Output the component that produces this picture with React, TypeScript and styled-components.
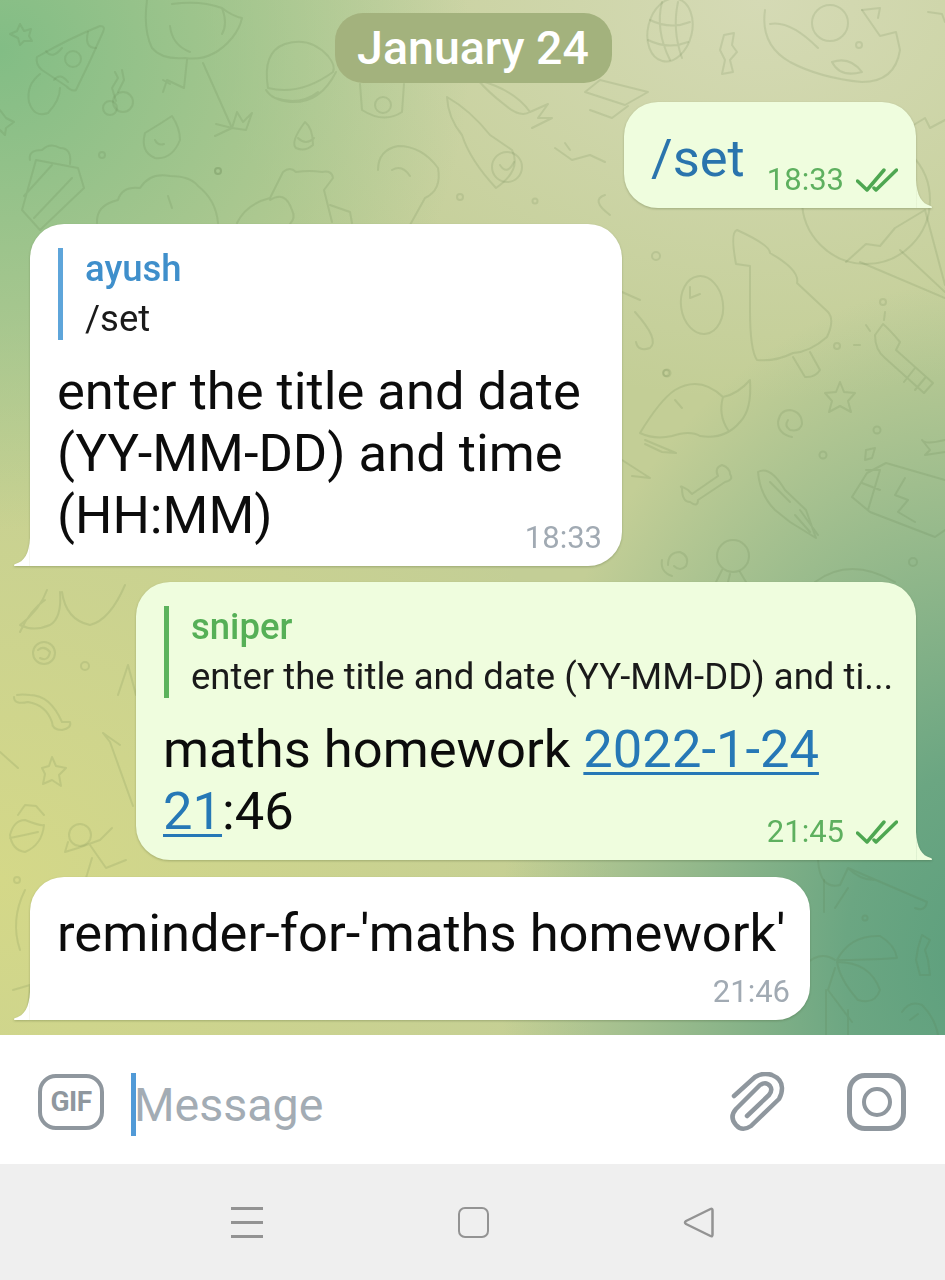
import React from 'react';
import styled, {createGlobalStyle} from "styled-components";

const GlobalStyle = createGlobalStyle`
  html, body {
    margin: 0;
    padding: 0;
    background: #fff;
  }
  * {
    box-sizing: border-box;
  }
`;

function Doodles() {
    return (
        <DoodleSvg viewBox="0 0 945 1035" fill="none">
            {/* top left: star, pizza, cherries */}
            <path d="M20 24 L24 31 L31 29 L29 36 L32 41 L24 41 L20 45 L18 38 L10 34 L17 31 Z" />
            <path d="M37 57 Q70 38 100 26 Q106 26 103 32 Q90 62 76 90 Q72 92 66 86 L42 70 Q35 64 37 57 Z" />
            <path d="M46 51 Q52 60 62 48 M88 32 Q84 48 96 48" />
            <circle cx="73" cy="59" r="8" />
            <path d="M40 74 Q26 85 29 102 Q34 118 48 113 Q60 100 60 88 M54 80 Q60 72 68 82" />
            <circle cx="110" cy="108" r="7" />
            <circle cx="123" cy="102" r="10" />
            <path d="M116 101 L112 88 L118 78 L115 72 M118 92 L124 80 L122 70" />
            <path d="M0 110 L6 118 L14 122 L6 128 L5 135 L0 130" />

            {/* flamingo */}
            <path d="M147 0 Q143 30 152 48 Q162 60 185 58 Q212 62 232 38 Q240 28 242 18 Q232 16 222 8 Q200 0 172 4 M170 26 Q172 45 190 52 M222 8 Q228 24 222 34" />
            <path d="M187 60 L184 88 L167 80 M163 80 L170 84 M163 92 L167 80 M203 63 L232 128 M216 124 L232 128 L215 136 M232 128 L237 112 L243 122 L252 113 L246 130 L232 128" />
            <path d="M145 133 Q160 124 172 116 Q180 128 180 140 Q172 160 155 158 Q140 152 145 133 Z M155 140 Q158 146 164 144" />
            <circle cx="102" cy="155" r="3" />
            <circle cx="218" cy="171" r="3" />

            {/* burger and candy corn */}
            <path d="M268 88 Q262 52 285 44 Q310 36 328 56 Q336 66 333 72 Q300 96 268 88 Z" />
            <path d="M266 90 Q272 100 290 102 Q320 104 336 72 M275 98 Q300 106 318 92" />
            <path d="M305 122 Q313 128 313 145 Q305 152 296 148 Q290 142 305 122 Z M298 138 Q306 146 314 138" />

            {/* popcorn, cloud, bear */}
            <path d="M22 210 L36 160 L78 168 L84 188 L40 230 Z M24 196 L52 165 M34 218 L72 178" />
            <path d="M30 160 Q28 150 42 150 Q50 142 60 148 Q72 148 70 164" />
            <path d="M97 223 Q96 205 118 200 Q122 186 140 188 Q150 172 170 176 Q190 176 198 186 Q216 200 218 223 M168 196 L172 208" />
            <path d="M237 223 Q246 204 270 198 L283 172 Q290 166 296 172 Q310 170 322 172 Q332 170 333 178 L324 190 L332 222" />
            <path d="M270 200 Q285 190 292 210 Q296 218 290 224 M330 205 L350 212 L352 223" />
            <circle cx="218" cy="171" r="3" />

            {/* ice cream, cup, drop */}
            <path d="M360 84 L362 110 Q384 124 402 112 L404 84" />
            <circle cx="383" cy="105" r="8" />
            <path d="M378 170 Q378 150 398 146 Q422 146 438 168 Q442 190 425 198 L410 225 M392 170 Q402 164 410 176" />

            {/* carrot, feather and swirl */}
            <path d="M478 80 Q515 90 530 112 Q520 118 505 105 Q488 92 478 80 Z M530 112 L548 104 L538 118 L552 118 L532 128" />
            <path d="M447 97 Q470 110 490 135 L512 150 Q522 170 496 188 Q470 160 462 135 Q448 118 447 97 Z" />
            <circle cx="507" cy="167" r="15" />
            <path d="M500 165 Q507 176 514 162" />
            <circle cx="460" cy="197" r="3" />
            <circle cx="535" cy="201" r="2.5" />
            <path d="M555 148 L572 160 L590 155 L605 162 M565 143 L570 150" />
            <path d="M610 215 Q590 200 605 195" />

            {/* top right: envelope, pineapple, candy, bird */}
            <path d="M600 80 L648 92 L625 105 L585 92 Z M590 110 L612 118 L628 106" />
            <ellipse cx="670" cy="30" rx="22" ry="32" transform="rotate(14 670 30)" />
            <path d="M650 20 Q670 30 690 22 M648 40 Q668 50 688 42 M662 2 Q655 30 670 60 M678 2 Q672 30 682 58" />
            <path d="M724 35 L734 33 L732 45 L737 52 L730 60 L733 72 L722 74 L725 60 L720 50 Z" />
            <circle cx="830" cy="23" r="18" />
            <path d="M765 10 Q760 45 790 62 Q820 78 862 82 Q895 82 900 50 L896 32 L880 36 L862 10 M770 24 Q790 20 818 48 M832 62 Q850 56 862 72 Q840 78 832 62 Z" />
            <path d="M862 10 L880 8 L878 18 M928 12 L942 14 L945 22 M912 126 L925 118 L930 128 L945 120" />
            <circle cx="859" cy="45" r="3" />

            {/* middle right: balloon, tree, egg, flashlight */}
            <circle cx="866" cy="200" r="64" />
            <path d="M846 262 L866 244 L880 246 L895 228 L925 210 M860 262 L945 298 M900 250 L945 292 M925 210 L945 285" />
            <path d="M737 230 Q730 232 736 264 L750 266 L750 310 Q750 350 757 360 Q775 362 793 353 Q810 352 827 337 Q835 320 828 312 L797 283 Q800 270 770 253 Q770 245 737 230 Z" />
            <path d="M793 357 L805 377 Q815 378 820 370 L810 352" />
            <circle cx="656" cy="256" r="4" />
            <ellipse cx="702" cy="305" rx="21" ry="29" transform="rotate(-8 702 305)" />
            <path d="M690 287 L690 298 L700 294" />
            <path d="M622 292 L640 300 M635 312 Q660 340 650 348 Q638 352 636 342" />
            <path d="M875 335 L883 324 Q890 330 900 342 L896 350 L933 383 L924 393 L885 358 Q875 350 875 335 Z M915 368 L904 382 M925 378 L915 390" />
            <circle cx="883" cy="302" r="3" />
            <path d="M885 312 L884 320 M866 325 L870 331 M854 345 L860 345" />
            <circle cx="837" cy="346" r="3" />
            <path d="M840 382 L844 392 L855 393 L848 401 L851 412 L840 406 L829 412 L832 401 L825 393 L836 392 Z" />
            <circle cx="666" cy="373" r="3" />

            {/* fox tail, swirl, bone */}
            <path d="M640 433 Q660 400 675 390 Q700 375 723 397 Q738 394 750 380 Q752 410 740 422 Q725 440 700 436 Q690 430 672 436 Q655 440 640 433 Z M723 397 Q718 415 728 430 M675 400 L682 408" />
            <path d="M645 440 L676 453 L662 452 L645 444 M622 460 L650 478 L632 476" />
            <path d="M792 437 Q778 434 778 422 Q780 410 790 410 Q802 412 802 424 Q800 432 790 430 Q784 426 788 420" />
            <path d="M682 488 Q678 484 688 490 L692 494 L718 476 Q714 468 722 465 Q730 468 730 474 Q734 480 725 482 L698 500 Q698 508 690 502 Q682 502 682 488 Z" />
            <circle cx="877" cy="430" r="3.5" />
            <circle cx="823" cy="455" r="3.5" />
            <circle cx="667" cy="373" r="3.5" />

            {/* squid and chocolate */}
            <path d="M758 472 Q770 465 785 490 L806 510 L816 538 L790 522 L775 510 Q760 495 758 472 Z M770 482 L790 502 M800 510 L818 535 M795 515 L810 532" />
            <path d="M852 497 L867 473 L886 463 L945 480 M852 497 L870 512 L935 537 L945 530 M866 470 L880 470 L868 510 M862 483 L880 490 M905 478 L895 495 L908 500 L898 512 L915 522" />
            <path d="M866 450 L875 448 L872 458 L865 460 Z" />
            <path d="M945 440 Q925 445 922 440 L930 450 L925 455 L945 452" />

            {/* bottom of the right column */}
            <path d="M668 565 Q668 552 680 552 Q690 556 686 566 Q680 572 674 566 M662 560 Q660 572 672 576" />
            <circle cx="733" cy="556" r="16" />
            <path d="M722 570 L716 582 M730 574 L728 582 M740 572 L746 582" />
            <path d="M815 582 Q850 556 895 582" />
            <circle cx="913" cy="562" r="4" />

            {/* left column below the first reply */}
            <path d="M20 632 Q30 610 45 600 M47 590 Q40 610 20 625 Q34 632 50 625 Q62 618 60 592 M62 592 Q66 620 90 625 Q110 620 125 585" />
            <circle cx="44" cy="653" r="11" />
            <path d="M38 650 Q44 645 50 652 Q48 662 40 658" />
            <circle cx="85" cy="666" r="4" />
            <path d="M17 695 Q22 694 30 695 Q50 695 62 722 L70 722 Q72 728 62 730 Q52 730 52 722 Q46 705 28 702 Q14 705 14 697" />
            <path d="M0 752 L18 768" />
            <path d="M52 757 L56 766 L66 768 L59 775 L61 786 L52 780 L43 784 L45 774 L42 768 L49 766 Z" />
            <path d="M18 815 L25 805 L36 806 L44 815 M10 835 Q14 820 25 820 Q40 826 44 825 Q42 845 25 852 Q12 850 10 835 Z M10 838 Q25 835 38 832" />
            <circle cx="80" cy="835" r="11" />
            <path d="M68 842 L65 852 L78 848 L100 840 L112 828 M90 845 L106 868 L126 860 M92 858 L86 878" />
            <path d="M118 695 L128 665 L136 695 M103 733 L110 742 L133 806 M103 733 L120 745" />
            <circle cx="17" cy="880" r="3" />
            <path d="M25 890 Q10 920 20 950 M13 990 L30 985 L28 1010" />

            {/* palm, umbrella and candy */}
            <path d="M818 860 Q820 890 840 885 L848 868 Q860 880 874 880 M848 868 L927 902 Q925 912 915 908" />
            <path d="M824 880 L824 912 M835 908 L848 888" />
            <path d="M837 960 Q850 935 880 936 Q895 945 897 958 Q865 960 837 960 Z" />
            <path d="M837 962 Q870 962 880 990 Q875 1005 858 1000 Q840 980 837 962 Z M805 965 Q820 950 835 960 M835 968 L828 990 L852 1022 M826 990 L826 1035 M848 1010 L848 1035" />
            <path d="M922 935 L930 940 L925 950 L928 960 L930 975 L920 975 L916 960 L918 948 Z" />
            <path d="M902 1012 Q910 1000 922 1005 Q935 1018 938 1035 M910 1020 L918 1014" />
            <circle cx="865" cy="918" r="2.5" />
        </DoodleSvg>
    );
}

function DoubleCheck() {
    return (
        <CheckSvg viewBox="0 0 42 24" fill="none">
            <path d="M1.5 13 L11 22 L28 2" />
            <path d="M18 20 L20 22 L40.5 2" />
        </CheckSvg>
    );
}

type TailProps = {
    $side: "left" | "right",
    color: string
}

function Tail({$side, color}: TailProps) {
    return (
        <TailSvg $side={$side} viewBox="0 0 24 40">
            {$side === "right"
                ? <path d="M0 0 C1 22 8 34 21 37 Q24 38 22 40 L0 40 Z" fill={color} />
                : <path d="M24 0 C23 22 16 34 3 37 Q0 38 2 40 L24 40 Z" fill={color} />}
        </TailSvg>
    );
}

function App() {
    return (
        <Page>
            <GlobalStyle />
            <Chat>
                <Wallpaper>
                    <Doodles />
                </Wallpaper>

                <DatePill>January 24</DatePill>

                <Outgoing $width={292} $height={106} $top={19}>
                    <Command>/set</Command>
                    <Meta $out>18:33 <DoubleCheck /></Meta>
                    <Tail $side="right" color="#effdde" />
                </Outgoing>

                <Incoming $width={592} $height={342}>
                    <Reply>
                        <ReplyName>ayush</ReplyName>
                        <ReplyText>/set</ReplyText>
                    </Reply>
                    <Body>enter the title and date<br />(YY-MM-DD) and time<br />(HH:MM)</Body>
                    <Meta>18:33</Meta>
                    <Tail $side="left" color="#ffffff" />
                </Incoming>

                <Outgoing $width={780} $height={278}>
                    <Reply $out>
                        <ReplyName $out>sniper</ReplyName>
                        <ReplyText>enter the title and date (YY-MM-DD) and ti...</ReplyText>
                    </Reply>
                    <Body>maths homework <TextLink>2022-1-24</TextLink><br /><TextLink>21</TextLink>:46</Body>
                    <Meta $out>21:45 <DoubleCheck /></Meta>
                    <Tail $side="right" color="#effdde" />
                </Outgoing>

                <Incoming $width={780} $height={143} $top={17}>
                    <Body $first>reminder-for-'maths homework'</Body>
                    <Meta>21:46</Meta>
                    <Tail $side="left" color="#ffffff" />
                </Incoming>
            </Chat>

            <InputBar>
                <GifIcon>GIF</GifIcon>
                <Caret />
                <Placeholder>Message</Placeholder>
                <ClipIcon viewBox="0 0 56 60" fill="none">
                    <path d="M5 24 L26 5 Q34 0 43 3 Q53 7 53 16 Q53 22 50 27 L22 54 Q13 60 7 53 Q0 45 7 37 L31 13 Q37 9 41 14 Q44 18 40 23 L18 44" />
                </ClipIcon>
                <CameraIcon><CameraLens /></CameraIcon>
            </InputBar>

            <NavBar>
                <MenuIcon><i /><i /><i /></MenuIcon>
                <HomeIcon />
                <BackIcon viewBox="0 0 31 31" fill="none">
                    <path d="M27.5 2 Q29.5 1 29.5 3.5 L29.5 27.5 Q29.5 30 27.5 29 L3 17 Q1 15.5 3 14 Z" />
                </BackIcon>
            </NavBar>
        </Page>
    );
}

const Page = styled.div`
  display: flex;
  flex-direction: column;
  width: 945px;
  height: 1280px;
  overflow: hidden;
  font-family: Roboto, "Liberation Sans", sans-serif;
`;

const Chat = styled.div`
  position: relative;
  display: flex;
  flex-direction: column;
  flex: none;
  height: 1035px;
  padding: 13px 29px 0 30px;
  overflow: hidden;
`;

const Wallpaper = styled.div`
  position: absolute;
  inset: 0;
  background:
    radial-gradient(ellipse 470px 480px at 0 50px, #82bd85 0%, rgba(130, 189, 133, 0) 100%),
    radial-gradient(ellipse 480px 680px at 980px 960px, #5c9f7d 0%, #6ba682 28%, rgba(107, 166, 130, 0) 100%),
    radial-gradient(ellipse 620px 560px at 0 880px, #d4d888 0%, rgba(212, 216, 136, 0) 100%),
    radial-gradient(ellipse 560px 400px at 760px 0, #d5dab5 0%, rgba(213, 218, 181, 0) 100%),
    #c3ce96;
`;

const DoodleSvg = styled.svg`
  position: absolute;
  inset: 0;
  width: 945px;
  height: 1035px;
  stroke: #54733f;
  stroke-opacity: 0.14;
  stroke-width: 2;
  stroke-linecap: round;
  stroke-linejoin: round;
`;

const DatePill = styled.div`
  position: relative;
  align-self: center;
  height: 70px;
  width: 277px;
  display: flex;
  align-items: center;
  justify-content: center;
  border-radius: 28px;
  background: #a3b27d;
  color: #fff;
  font-size: 46.5px;
  font-weight: 500;
`;

const BubbleBase = styled.div<{$width: number, $height: number, $top?: number}>`
  position: relative;
  flex: none;
  width: ${props => props.$width}px;
  height: ${props => props.$height}px;
  margin-top: ${props => props.$top ?? 16}px;
  filter: drop-shadow(0 1px 1px rgba(50, 70, 30, 0.28));
`;

const Outgoing = styled(BubbleBase)`
  align-self: flex-end;
  padding: 16px 27px 0 27px;
  border-radius: 34px 34px 0 34px;
  background: #effdde;
`;

const Incoming = styled(BubbleBase)`
  align-self: flex-start;
  padding: 16px 27px 0 27px;
  border-radius: 34px 34px 0 0;
  border-bottom-right-radius: 34px;
  background: #fff;
`;

const TailSvg = styled.svg<{$side: "left" | "right"}>`
  position: absolute;
  bottom: 0;
  width: 17px;
  height: 28px;
  ${props => props.$side === "right" ? "left: 100%;" : "right: 100%;"}
`;

const Command = styled.div`
  margin-top: 10px;
  color: #2a74ad;
  font-size: 52.5px;
  line-height: 60px;
`;

const Reply = styled.div<{$out?: boolean}>`
  display: flex;
  flex-direction: column;
  justify-content: center;
  height: 92px;
  margin: 8px 0 0 1px;
  padding-left: 22px;
  border-left: 5px solid ${props => props.$out ? "#5cb35c" : "#5ea5da"};
`;

const ReplyName = styled.div<{$out?: boolean}>`
  color: ${props => props.$out ? "#56b057" : "#3f8fcb"};
  font-size: 36.5px;
  font-weight: 500;
  line-height: 50px;
`;

const ReplyText = styled.div`
  color: #1a1a1a;
  font-size: 36.5px;
  line-height: 50px;
  white-space: nowrap;
`;

const Body = styled.div<{$first?: boolean}>`
  margin-top: ${props => props.$first ? 9 : 20}px;
  color: #0c0c0c;
  font-size: 52.5px;
  line-height: 62px;
  white-space: nowrap;
`;

const TextLink = styled.span`
  color: #2678b6;
  text-decoration: underline;
  text-decoration-thickness: 3px;
  text-underline-offset: 5px;
`;

const Meta = styled.div<{$out?: boolean}>`
  position: absolute;
  right: ${props => props.$out ? 18 : 20}px;
  bottom: 10px;
  display: flex;
  align-items: center;
  gap: 12px;
  color: ${props => props.$out ? "#5eb05f" : "#a1aab3"};
  font-size: 31px;
  line-height: 36px;
`;

const CheckSvg = styled.svg`
  width: 42px;
  height: 24px;
  stroke: #4ea751;
  stroke-width: 3.5;
  stroke-linecap: round;
  stroke-linejoin: round;
`;

const InputBar = styled.div`
  display: flex;
  align-items: center;
  flex: none;
  height: 129px;
  padding: 4px 39px 0 38px;
  background: #fff;
`;

const GifIcon = styled.div`
  display: flex;
  align-items: center;
  justify-content: center;
  width: 66px;
  height: 56px;
  border: 4px solid #8f979e;
  border-radius: 18px;
  color: #8f979e;
  font-size: 28px;
  font-weight: 700;
  letter-spacing: -0.5px;
`;

const Caret = styled.div`
  width: 5px;
  height: 63px;
  margin: 6px 0 0 27px;
  background: #519ad7;
`;

const Placeholder = styled.div`
  flex: 1;
  margin: 6px 0 0 -2px;
  color: #a3acb4;
  font-size: 46.5px;
`;

const ClipIcon = styled.svg`
  width: 56px;
  height: 60px;
  margin-right: 62px;
  stroke: #8f979e;
  stroke-width: 4.5;
  stroke-linecap: round;
  stroke-linejoin: round;
`;

const CameraIcon = styled.div`
  display: flex;
  align-items: center;
  justify-content: center;
  width: 59px;
  height: 58px;
  border: 5px solid #8f979e;
  border-radius: 18px;
`;

const CameraLens = styled.div`
  width: 30px;
  height: 30px;
  border: 4px solid #8f979e;
  border-radius: 50%;
`;

const NavBar = styled.div`
  display: flex;
  align-items: center;
  justify-content: space-between;
  flex: none;
  height: 116px;
  padding: 0 231px;
  background: #efefef;
`;

const MenuIcon = styled.div`
  display: flex;
  flex-direction: column;
  justify-content: space-between;
  width: 32px;
  height: 31px;

  i {
    display: block;
    height: 3px;
    background: #939393;
  }
`;

const HomeIcon = styled.div`
  width: 31px;
  height: 31px;
  border: 2.5px solid #939393;
  border-radius: 7px;
`;

const BackIcon = styled.svg`
  width: 31px;
  height: 31px;
  stroke: #939393;
  stroke-width: 2.5;
  stroke-linejoin: round;
`;

export default App;
